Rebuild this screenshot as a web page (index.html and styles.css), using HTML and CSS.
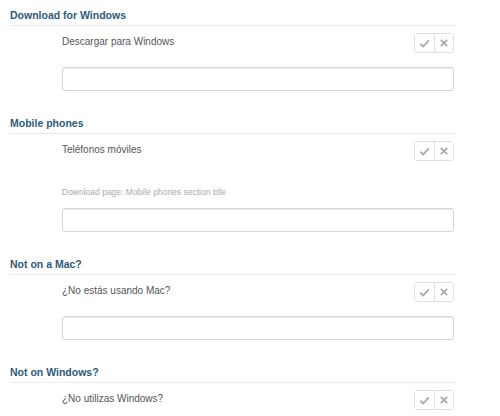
FILE: index.html
```html
<!DOCTYPE html>
<html lang="es">
<head>
    <meta charset="UTF-8">
    <meta name="viewport" content="width=device-width, initial-scale=1.0">
    <title>Traducciones</title>
    <link rel="stylesheet" href="styles.css">
</head>
<body>
    <div class="strings">
        <div class="string">
            <h3 class="string-title">Download for Windows</h3>
            <div class="string-row">
                <span class="string-source">Descargar para Windows</span>
                <div class="actions">
                    <button class="action" title="Aprobar">
                        <svg viewBox="0 0 12 12" width="11" height="11"><path d="M1.5 6.3 L4.6 9.3 L10.6 2.6" fill="none" stroke="#a9a9a9" stroke-width="2"/></svg>
                    </button>
                    <button class="action" title="Rechazar">
                        <svg viewBox="0 0 12 12" width="10" height="10"><path d="M2.2 2.2 L9.8 9.8 M9.8 2.2 L2.2 9.8" fill="none" stroke="#a9a9a9" stroke-width="2.1"/></svg>
                    </button>
                </div>
            </div>
            <input class="string-input" type="text">
        </div>

        <div class="string">
            <h3 class="string-title">Mobile phones</h3>
            <div class="string-row">
                <span class="string-source">Teléfonos móviles</span>
                <div class="actions">
                    <button class="action" title="Aprobar">
                        <svg viewBox="0 0 12 12" width="11" height="11"><path d="M1.5 6.3 L4.6 9.3 L10.6 2.6" fill="none" stroke="#a9a9a9" stroke-width="2"/></svg>
                    </button>
                    <button class="action" title="Rechazar">
                        <svg viewBox="0 0 12 12" width="10" height="10"><path d="M2.2 2.2 L9.8 9.8 M9.8 2.2 L2.2 9.8" fill="none" stroke="#a9a9a9" stroke-width="2.1"/></svg>
                    </button>
                </div>
            </div>
            <p class="string-note">Download page: Mobile phones section title</p>
            <input class="string-input" type="text">
        </div>

        <div class="string">
            <h3 class="string-title">Not on a Mac?</h3>
            <div class="string-row">
                <span class="string-source">¿No estás usando Mac?</span>
                <div class="actions">
                    <button class="action" title="Aprobar">
                        <svg viewBox="0 0 12 12" width="11" height="11"><path d="M1.5 6.3 L4.6 9.3 L10.6 2.6" fill="none" stroke="#a9a9a9" stroke-width="2"/></svg>
                    </button>
                    <button class="action" title="Rechazar">
                        <svg viewBox="0 0 12 12" width="10" height="10"><path d="M2.2 2.2 L9.8 9.8 M9.8 2.2 L2.2 9.8" fill="none" stroke="#a9a9a9" stroke-width="2.1"/></svg>
                    </button>
                </div>
            </div>
            <input class="string-input" type="text">
        </div>

        <div class="string">
            <h3 class="string-title">Not on Windows?</h3>
            <div class="string-row">
                <span class="string-source">¿No utilizas Windows?</span>
                <div class="actions">
                    <button class="action" title="Aprobar">
                        <svg viewBox="0 0 12 12" width="11" height="11"><path d="M1.5 6.3 L4.6 9.3 L10.6 2.6" fill="none" stroke="#a9a9a9" stroke-width="2"/></svg>
                    </button>
                    <button class="action" title="Rechazar">
                        <svg viewBox="0 0 12 12" width="10" height="10"><path d="M2.2 2.2 L9.8 9.8 M9.8 2.2 L2.2 9.8" fill="none" stroke="#a9a9a9" stroke-width="2.1"/></svg>
                    </button>
                </div>
            </div>
            <input class="string-input" type="text">
        </div>
    </div>
</body>
</html>
```

FILE: styles.css
```css
body {
    margin: 0;
    font-family: "Liberation Sans", Arial, sans-serif;
    background-color: #fff;
    color: #555;
}
.strings {
    width: 446px;
    padding: 9px 0 0 10px;
}
.string {
    margin-bottom: 26px;
}
.string-title {
    margin: 0;
    padding-bottom: 3px;
    font-size: 10.5px;
    line-height: 13px;
    font-weight: bold;
    color: #2d5a7b;
    border-bottom: 1px solid #ececec;
}
.string-row {
    display: flex;
    justify-content: space-between;
    align-items: center;
    margin: 7px 2px 0 52px;
}
.string-source {
    font-size: 10px;
    line-height: 12px;
    margin-top: -2px;
    color: #555;
}
.actions {
    display: flex;
    border: 1px solid #e0e0e0;
    border-radius: 3px;
}
.action {
    display: flex;
    align-items: center;
    justify-content: center;
    width: 19px;
    height: 18px;
    padding: 0;
    background: #fff;
    border: none;
    cursor: pointer;
}
.action + .action {
    border-left: 1px solid #e0e0e0;
}
.string-note {
    margin: 26px 0 10px 52px;
    font-size: 8.5px;
    line-height: 11px;
    color: #aaa;
}
.string-input {
    display: block;
    box-sizing: border-box;
    width: 392px;
    height: 24px;
    margin: 14px 0 0 52px;
    border: 1px solid #d4d4d4;
    border-radius: 3px;
    box-shadow: inset 0 1px 1px rgba(0,0,0,0.07);
}
.string-note + .string-input {
    margin-top: 0;
}
```
